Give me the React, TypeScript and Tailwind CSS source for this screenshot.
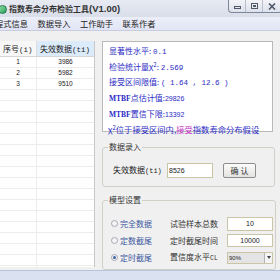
import React from 'react';

const rows = [
  { i: '1', t: '3986' },
  { i: '2', t: '5982' },
  { i: '3', t: '9510' },
];

const blankRows = Array.from({ length: 17 }, (_, k) => k);

const Radio = ({ checked, label }: { checked?: boolean; label: string }) => (
  <div className="flex items-center w-[59px]">
    <span className="w-[7px] h-[7px] rounded-full border border-[#a4a9b4] bg-[#f4f4f4] flex items-center justify-center">
      {checked && <span className="w-[3px] h-[3px] rounded-full bg-[#3e5fa8]" />}
    </span>
    <span className="ml-[2px] text-[8px] leading-[10px] text-[#3f5aa0]">{label}</span>
  </div>
);

export default function App() {
  return (
    <div className="w-[280px] h-[280px] overflow-hidden bg-[#f0f0f0] flex flex-col font-['Noto_Sans_CJK_SC',sans-serif] text-[#222]">
      {/* title bar */}
      <div className="h-[17px] flex items-start bg-gradient-to-b from-[#e7eaf3] to-[#d9dee9]">
        <div className="w-[9px] h-[9px] ml-[-2px] mt-[5px] rounded-full bg-gradient-to-br from-[#8fe3a6] to-[#1f9d5b] border border-[#23784a]" />
        <div className="ml-[2px] mt-[3px] text-[8px] leading-[12px] text-[#333] font-semibold whitespace-nowrap">
          指数寿命分布检验工具<span className="font-['Liberation_Sans',sans-serif] text-[9.5px]">(V1.00)</span>
        </div>
        <div className="flex-1" />
        <div className="flex h-[13px] border-l border-b border-[#7d879c] rounded-bl-[4px] bg-gradient-to-b from-[#f3f4f8] to-[#dde1ea]">
          <div className="w-[17px] flex items-center justify-center border-r border-[#b8bfcc]">
            <span className="w-[7px] h-[3px] border border-[#50586a] mt-[3px]" />
          </div>
          <div className="w-[17px] flex items-center justify-center border-r border-[#b8bfcc]">
            <span className="w-[7px] h-[6px] border border-[#50586a] flex items-center justify-center">
              <span className="w-[3px] h-[2px] border border-[#50586a]" />
            </span>
          </div>
          <div className="w-[17px] flex items-center justify-center">
            <svg width="8" height="7" viewBox="0 0 8 7">
              <path d="M1 0.5 L7 6.5 M7 0.5 L1 6.5" stroke="#50586a" strokeWidth="1.6" />
            </svg>
          </div>
        </div>
      </div>

      {/* menu bar */}
      <div className="h-[15px] flex items-center gap-[9.5px] bg-gradient-to-b from-[#eceef9] to-[#e2e5f5] border-b border-[#c7cce0] text-[8.25px] leading-[10px] text-[#222] whitespace-nowrap">
        <span className="ml-[-5px]">程式信息</span>
        <span>数据导入</span>
        <span>工作助手</span>
        <span>联系作者</span>
      </div>

      {/* body */}
      <div className="flex-1 flex pt-[10px]">
        {/* table */}
        <div className="w-[95px] h-[226px] bg-white border-r border-[#c8c8c8] overflow-hidden">
          <div className="flex h-[16px] border-b border-[#d5d5d5] text-[8px] leading-[16px]">
            <div className="w-[37px] pl-[3px] bg-[#f7f7f7] border-r border-[#dcdcdc] whitespace-nowrap">
              序号<span className="font-['Liberation_Mono',monospace] text-[7.5px]">(i)</span>
            </div>
            <div className="flex-1 pl-[3px] bg-[#dcebfa] whitespace-nowrap">
              失效数据<span className="font-['Liberation_Mono',monospace] text-[7.5px]">(ti)</span>
            </div>
          </div>
          {rows.map((r) => (
            <div key={r.i} className="flex h-[11px] border-b border-[#ececec] text-[6.5px] leading-[10px] font-['Liberation_Sans',sans-serif] text-[#222]">
              <div className="w-[37px] text-center border-r border-[#ececec]">{r.i}</div>
              <div className="flex-1 text-center">{r.t}</div>
            </div>
          ))}
          {blankRows.map((k) => (
            <div key={k} className="flex h-[11px] border-b border-[#ececec]">
              <div className="w-[37px] border-r border-[#ececec]" />
              <div className="flex-1" />
            </div>
          ))}
        </div>

        {/* right column */}
        <div className="ml-[7px] w-[173px] flex flex-col">
          <div className="h-[91px] w-[171px] bg-white border border-[#b9b9b9] pl-[6px] pt-[2px] text-[8px] leading-[14.6px] text-[#2b2bc4] whitespace-nowrap">
            <div>
              显著性水平: <span className="font-['Liberation_Mono',monospace] text-[7.5px]">0.1</span>
            </div>
            <div>
              检验统计量χ<sup className="text-[6px]">2</sup>: <span className="font-['Liberation_Mono',monospace] text-[7.5px]">2.569</span>
            </div>
            <div>
              接受区间限值: <span className="font-['Liberation_Mono',monospace] text-[7.5px]">( 1.64 , 12.6 )</span>
            </div>
            <div>
              <span className="font-['Liberation_Serif',serif] font-bold text-[7.5px]">MTBF</span>点估计值:<span className="font-['Liberation_Sans',sans-serif] text-[7px]">29826</span>
            </div>
            <div>
              <span className="font-['Liberation_Serif',serif] font-bold text-[7.5px]">MTBF</span>置信下限:<span className="font-['Liberation_Sans',sans-serif] text-[7px]">13392</span>
            </div>
            <div className="text-[8.3px] -ml-[1px]">
              χ<sup className="text-[6px]">2</sup>位于接受区间内,<span className="text-[#c233c8]">接受</span>指数寿命分布假设
            </div>
          </div>

          <fieldset className="mt-[10px] border border-[#d0d0c8] rounded-[3px] px-[10px] pb-[7px]">
            <legend className="ml-[-5px] px-[1px] text-[8px] leading-[10px] text-[#333]">数据录入</legend>
            <div className="flex items-center pt-[10px]">
              <span className="w-[54px] text-[8px] leading-[15px] whitespace-nowrap text-[#222]">
                失效数据<span className="font-['Liberation_Mono',monospace] text-[7px]">(ti)</span>
              </span>
              <div className="w-[46px] h-[15px] bg-white border border-[#c9c6a8] text-[7px] leading-[13px] pl-[1px] font-['Liberation_Sans',sans-serif]">
                8526
              </div>
              <button className="ml-[10px] w-[33px] h-[15px] rounded-[2px] border border-[#8d8d8d] bg-gradient-to-b from-[#fbfbfb] to-[#e3e3e0] text-[8px] leading-[13px] text-[#333]">
                确 认
              </button>
            </div>
          </fieldset>

          <fieldset className="mt-[8px] border border-[#d0d0c8] rounded-[3px] pl-[8px] pr-[2px] pb-[3px]">
            <legend className="ml-[-3px] px-[1px] text-[8px] leading-[10px] text-[#333]">模型设置</legend>
            <div className="pt-[10px] flex flex-col">
              <div className="flex items-center h-[17px]">
                <Radio label="完全数据" />
                <span className="w-[57px] text-[8px] leading-[10px] text-[#333]">试验样本总数</span>
                <div className="w-[46px] h-[14px] bg-white border border-[#c9c6a8] text-[7px] leading-[12px] text-center font-['Liberation_Sans',sans-serif]">10</div>
              </div>
              <div className="flex items-center h-[17px]">
                <Radio label="定数截尾" />
                <span className="w-[57px] text-[8px] leading-[10px] text-[#333]">定时截尾时间</span>
                <div className="w-[46px] h-[13px] bg-white border border-[#c9c6a8] text-[7px] leading-[11px] text-center font-['Liberation_Sans',sans-serif]">10000</div>
              </div>
              <div className="flex items-center h-[17px]">
                <Radio checked label="定时截尾" />
                <span className="w-[57px] text-[8px] leading-[10px] text-[#333] whitespace-nowrap">
                  置信度水平<span className="font-['Liberation_Mono',monospace] text-[6.5px]">CL</span>
                </span>
                <div className="w-[46px] h-[12px] flex bg-[#e4e4e4] border border-[#c9c6a8]">
                  <span className="flex-1 pl-[1px] text-[6px] leading-[10px] font-['Liberation_Sans',sans-serif]">90%</span>
                  <span className="w-[8px] bg-[#f4f4f4] border-l border-[#b4b4b4] flex items-center justify-center">
                    <svg width="4" height="3" viewBox="0 0 4 3">
                      <path d="M0 0 L4 0 L2 3 Z" fill="#444" />
                    </svg>
                  </span>
                </div>
              </div>
            </div>
          </fieldset>
        </div>
      </div>

      {/* status bar */}
      <div className="h-[10px] bg-[#dae2f2] border-t border-[#b7c3dd]" />
    </div>
  );
}
